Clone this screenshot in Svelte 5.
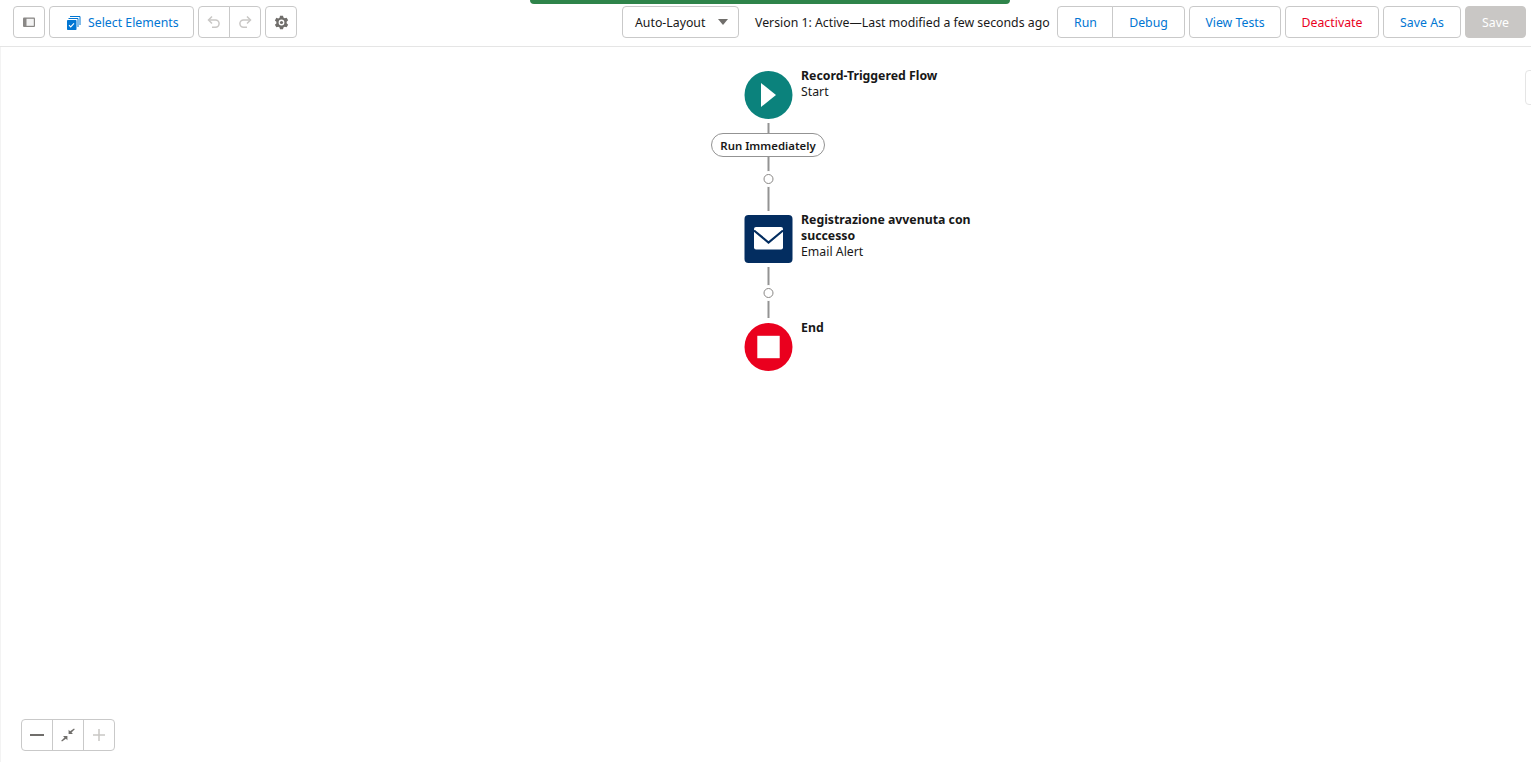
<script lang="ts">
  const rightButtons = [
    { label: 'View Tests', width: 92 },
    { label: 'Deactivate', width: 94, danger: true },
    { label: 'Save As', width: 78 }
  ]
</script>

<div class="page">
  <div class="toast-bar"></div>

  <header class="toolbar">
    <button class="btn icon" aria-label="Toggle panel">
      <svg width="14" height="14" viewBox="0 0 14 14">
        <rect x="1" y="2.500" width="12" height="9.500" rx="1" fill="#8a8886" />
        <rect x="4.500" y="3.800" width="7.300" height="7" fill="#f3f3f3" />
      </svg>
    </button>
    <button class="btn select">
      <svg width="16" height="16" viewBox="0 0 16 16">
        <path d="M5 2.500h10V11" fill="none" stroke="#0176d3" />
        <path d="M3.500 4.500H13V13" fill="none" stroke="#0176d3" />
        <rect x="2" y="6" width="9.500" height="10" rx="0.800" fill="#0176d3" />
        <path d="M4 11.200l1.700 1.700 3.300-3.500" fill="none" stroke="#fff" stroke-width="1.100" />
      </svg>
      Select Elements
    </button>
    <div class="group">
      <button class="btn icon" aria-label="Undo">
        <svg width="16" height="16" viewBox="0 0 16 16" fill="none" stroke="#c9c7c5" stroke-width="1.500">
          <path d="M3 6h6.500a3.500 3.500 0 0 1 0 7.200H6" />
          <path d="M6 2.500L2.500 6 6 9.500" />
        </svg>
      </button>
      <button class="btn icon" aria-label="Redo">
        <svg width="16" height="16" viewBox="0 0 16 16" fill="none" stroke="#c9c7c5" stroke-width="1.500">
          <path d="M13 6H6.500a3.500 3.500 0 0 0 0 7.200H10" />
          <path d="M10 2.500L13.500 6 10 9.500" />
        </svg>
      </button>
    </div>
    <button class="btn icon" aria-label="Settings">
      <svg width="15" height="15" viewBox="0 0 14 14">
        <path
          fill="#706e6b"
          fill-rule="evenodd"
          d="M5.600.6h2.800l.4 1.800 1.200.7 1.800-.6 1.400 2.500-1.400 1.200v1.600l1.400 1.200-1.400 2.500-1.800-.6-1.200.7-.4 1.800H5.600l-.4-1.800-1.200-.7-1.800.6L.8 9.100l1.400-1.200V6.300L.8 5.100l1.400-2.500 1.800.6 1.200-.7zM7 4.300a2.700 2.700 0 1 0 0 5.400 2.700 2.700 0 0 0 0-5.400z"
        />
        <circle cx="7" cy="7" r="1.500" fill="#706e6b" />
      </svg>
    </button>

    <div class="spacer"></div>

    <button class="btn layout">
      <span>Auto-Layout</span>
      <svg width="10" height="6" viewBox="0 0 10 6"><path d="M0 0h10L5 6z" fill="#706e6b" /></svg>
    </button>
    <span class="status">Version 1: Active—Last modified a few seconds ago</span>
    <div class="group">
      <button class="btn run">Run</button>
      <button class="btn debug">Debug</button>
    </div>
    {#each rightButtons as b}
      <button class="btn" class:danger={b.danger} style="width: {b.width}px">{b.label}</button>
    {/each}
    <button class="btn save" disabled>Save</button>
  </header>

  <main class="canvas">
    <div class="edge-tab"></div>

    <div class="line" style="top: 76px; height: 88px"></div>
    <div class="line" style="top: 220px; height: 51px"></div>

    <div class="pill">Run Immediately</div>
    <div class="dot" style="top: 127px"></div>
    <div class="dot" style="top: 241px"></div>

    <div class="node" style="top: 24px">
      <div class="shape start">
        <svg width="48" height="48" viewBox="0 0 48 48"><path d="M16.500 12L31.500 24l-15 12z" fill="#fff" /></svg>
      </div>
      <div class="label">
        <strong>Record-Triggered Flow</strong>
        <span>Start</span>
      </div>
    </div>

    <div class="node" style="top: 168px">
      <div class="shape email">
        <svg width="48" height="48" viewBox="0 0 48 48">
          <rect x="9.500" y="12" width="29" height="22.500" rx="2" fill="#fff" />
          <path d="M9.500 15.500L24 27.500l14.500-12" fill="none" stroke="#032d60" stroke-width="2.200" />
        </svg>
      </div>
      <div class="label">
        <strong>Registrazione avvenuta con successo</strong>
        <span>Email Alert</span>
      </div>
    </div>

    <div class="node" style="top: 276px">
      <div class="shape end">
        <svg width="48" height="48" viewBox="0 0 48 48"><rect x="12.800" y="12.800" width="22.400" height="22.400" fill="#fff" /></svg>
      </div>
      <div class="label">
        <strong>End</strong>
      </div>
    </div>

    <div class="zoom">
      <button aria-label="Zoom out">
        <svg width="14" height="14" viewBox="0 0 14 14"><rect x="0" y="6" width="14" height="2" fill="#706e6b" /></svg>
      </button>
      <button aria-label="Fit">
        <svg width="14" height="14" viewBox="0 0 14 14" fill="#706e6b">
          <path d="M13 0.500l.8.800-3.300 3.300 1.500 1.500H7.600V1.700l1.500 1.500z" />
          <path d="M1 13.500l-.8-.8 3.300-3.300L2 7.900h4.400v4.400l-1.500-1.500z" />
        </svg>
      </button>
      <button aria-label="Zoom in">
        <svg width="12" height="12" viewBox="0 0 12 12"><path d="M5.250 0h1.500v5.250H12v1.500H6.750V12h-1.500V6.750H0v-1.500h5.250z" fill="#c9c7c5" /></svg>
      </button>
    </div>
  </main>
</div>

<style>
  :global(body) {
    margin: 0;
    background: #fff;
  }
  .page {
    position: relative;
    width: 1531px;
    height: 762px;
    overflow: hidden;
    font-family: 'Noto Sans', 'Open Sans', sans-serif;
    font-size: 12.3px;
    color: #181818;
  }
  .toast-bar {
    position: absolute;
    left: 530px;
    top: 0;
    width: 480px;
    height: 4px;
    background: #2e844a;
    border-radius: 0 0 4px 4px;
  }
  .toolbar {
    display: flex;
    align-items: center;
    gap: 4px;
    box-sizing: border-box;
    height: 47px;
    padding: 0 5px 2px 13px;
    border-bottom: 1px solid #e5e5e5;
  }
  .spacer {
    flex: 1;
  }
  .btn {
    display: inline-flex;
    align-items: center;
    justify-content: center;
    box-sizing: border-box;
    height: 32px;
    padding: 0;
    border: 1px solid #c9c9c9;
    border-radius: 4px;
    background: #fff;
    color: #0176d3;
    font: inherit;
  }
  .icon {
    width: 32px;
  }
  .select {
    width: 145px;
    gap: 7px;
    justify-content: flex-start;
    padding-left: 15px;
  }
  .group {
    display: flex;
  }
  .group .btn:first-child {
    border-radius: 4px 0 0 4px;
  }
  .group .btn:last-child {
    margin-left: -1px;
    border-radius: 0 4px 4px 0;
  }
  .layout {
    width: 117px;
    justify-content: space-between;
    padding: 0 10px 0 12px;
    color: #181818;
  }
  .status {
    margin: 0 3px 0 12px;
    width: 295px;
    white-space: nowrap;
  }
  .run {
    width: 56px;
    padding-left: 1px;
  }
  .debug {
    width: 73px;
  }
  .danger {
    color: #ea001e;
  }
  .save {
    width: 61px;
    background: #c9c7c5;
    border-color: #c9c7c5;
    color: #fff;
  }
  .canvas {
    position: relative;
    height: 715px;
    border-left: 1px solid #f3f3f3;
    box-sizing: border-box;
  }
  .edge-tab {
    position: absolute;
    left: 1524px;
    top: 23px;
    width: 12px;
    height: 33px;
    border: 1px solid #e5e5e5;
    border-radius: 4px;
    background: #fff;
  }
  .line {
    position: absolute;
    left: 766px;
    width: 2px;
    background: #939393;
    transform: translateX(0.5px);
  }
  .pill {
    position: absolute;
    left: 710px;
    top: 86px;
    width: 114px;
    height: 24px;
    box-sizing: border-box;
    border: 1px solid #939393;
    border-radius: 12px;
    background: #fff;
    text-align: center;
    line-height: 24px;
    font-size: 11.4px;
    font-weight: 600;
  }
  .dot {
    position: absolute;
    left: 762px;
    width: 10px;
    height: 10px;
    box-sizing: border-box;
    border: 1px solid #8a8886;
    border-radius: 50%;
    background: #fff;
    box-shadow: 0 0 0 3px #fff;
    transform: translateX(0.5px);
  }
  .node {
    position: absolute;
    left: 743px;
    display: flex;
    gap: 9px;
  }
  .shape {
    flex: none;
    width: 48px;
    height: 48px;
    border-radius: 50%;
    transform: translateX(0.5px);
  }
  .shape svg {
    display: block;
  }
  .start {
    background: #0b827c;
  }
  .email {
    background: #032d60;
    border-radius: 4px;
  }
  .end {
    background: #ea001e;
  }
  .label {
    width: 178px;
    display: flex;
    flex-direction: column;
    line-height: 16px;
    margin-top: -3px;
  }
  .label strong {
    font-weight: 700;
  }
  .zoom {
    position: absolute;
    left: 20px;
    top: 672px;
    display: flex;
    height: 32px;
    box-sizing: border-box;
    border: 1px solid #c9c9c9;
    border-radius: 4px;
    background: #fff;
  }
  .zoom button {
    display: flex;
    align-items: center;
    justify-content: center;
    width: 31px;
    padding: 0;
    border: 0;
    border-left: 1px solid #c9c9c9;
    background: none;
  }
  .zoom button:first-child {
    width: 30px;
    border-left: 0;
  }
</style>
